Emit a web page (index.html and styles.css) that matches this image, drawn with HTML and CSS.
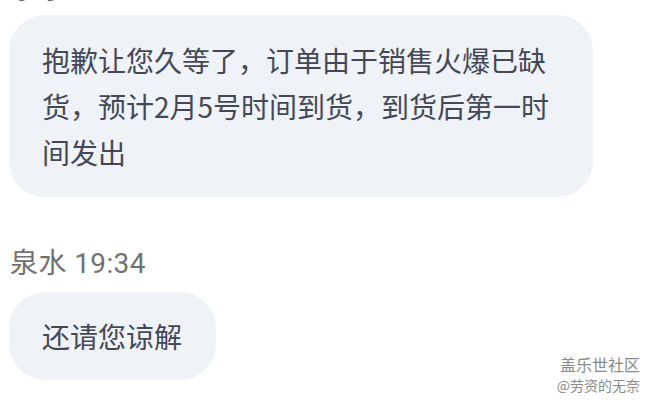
FILE: index.html
```html
<!DOCTYPE html>
<html lang="zh-CN">
<head>
    <meta charset="UTF-8">
    <meta name="viewport" content="width=device-width, initial-scale=1.0">
    <title>聊天记录</title>
    <link rel="stylesheet" href="styles.css">
</head>
<body>
    <div class="chat">
        <div class="sender sender-cut">泉水 19:33</div>
        <div class="bubble bubble-wide">抱歉让您久等了，订单由于销售火爆已缺货，预计2月5号时间到货，到货后第一时间发出</div>

        <div class="sender">泉水 19:34</div>
        <div class="bubble">还请您谅解</div>
    </div>

    <div class="watermark">
        <div class="watermark-site">盖乐世社区</div>
        <div class="watermark-user">@劳资的无奈</div>
    </div>
</body>
</html>
```

FILE: styles.css
```css
:root {
    --bg-color: #ffffff;
    --bubble-bg: #eff2f6;
    --text-color: #444856;
    --name-color: #717171;
    --mark-color: #8a8a8a;
}

* {
    margin: 0;
    padding: 0;
    box-sizing: border-box;
}

body {
    width: 650px;
    height: 408px;
    overflow: hidden;
    position: relative;
    background: var(--bg-color);
    font-family: Roboto, "Noto Sans CJK SC", sans-serif;
}

.chat {
    display: flex;
    flex-direction: column;
    align-items: flex-start;
    padding-left: 9px;
}

.sender {
    font-size: 28px;
    line-height: 30px;
    letter-spacing: 0.4px;
    color: var(--name-color);
    margin: 52px 0 13px 1px;
}

.sender-cut {
    margin-top: -25px;
    margin-bottom: 10px;
}

.bubble {
    background: var(--bubble-bg);
    color: var(--text-color);
    font-size: 28px;
    line-height: 46px;
    padding: 21px 34px 21px 33px;
    border-radius: 36px;
    font-family: "Noto Sans CJK SC", sans-serif;
}

.bubble-wide {
    width: 584px;
    padding-top: 22px;
    padding-bottom: 22px;
}

.watermark {
    position: absolute;
    right: 10px;
    bottom: 13px;
    text-align: right;
    color: var(--mark-color);
    font-family: "Noto Sans CJK SC", sans-serif;
    text-shadow: 0 0 1px #fff;
}

.watermark-site {
    font-size: 16px;
    line-height: 21px;
}

.watermark-user {
    font-size: 14px;
    line-height: 20px;
}
```
